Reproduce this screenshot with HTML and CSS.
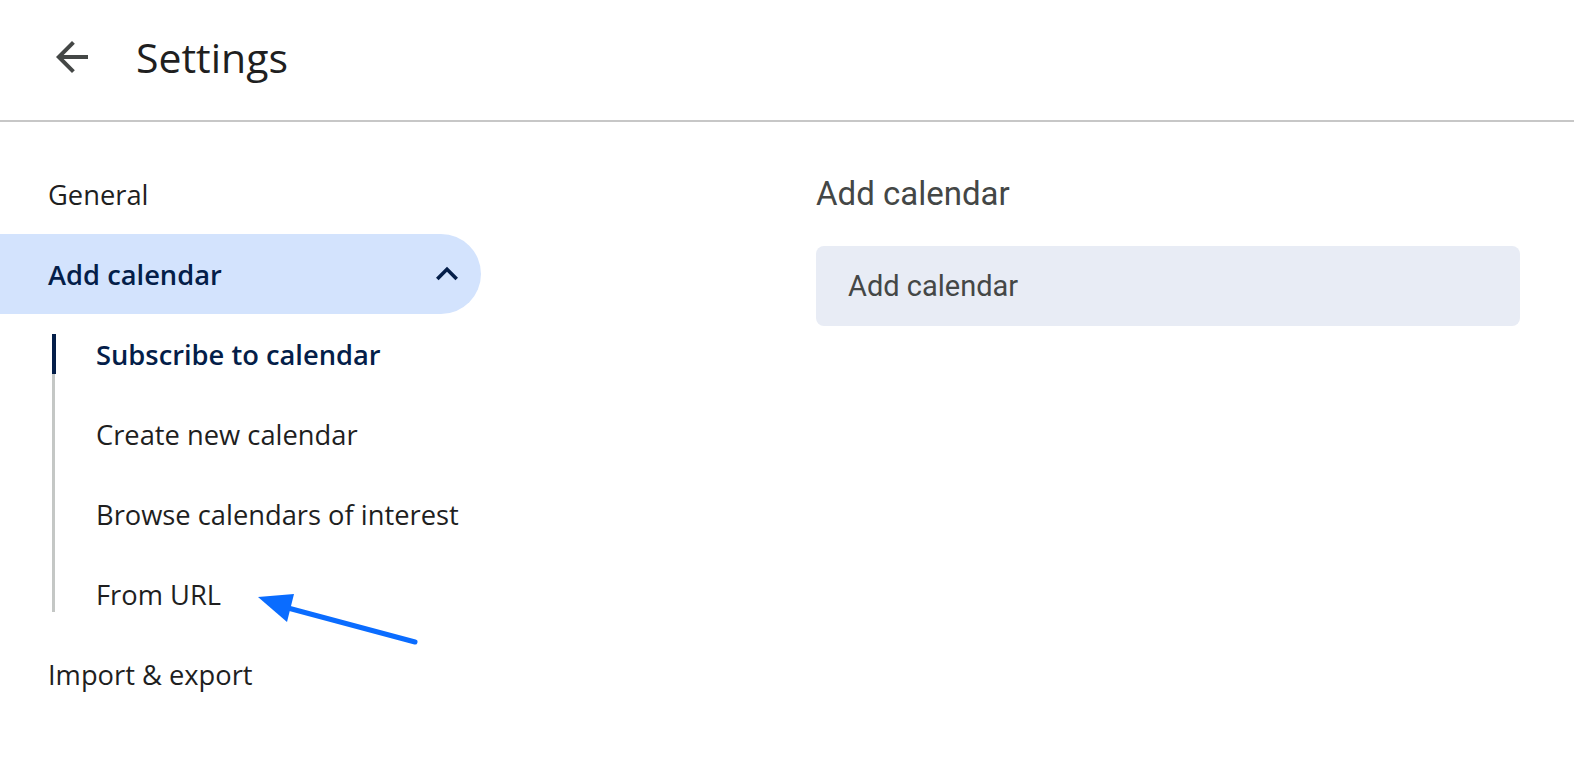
FILE: index.html
```html
<!DOCTYPE html>
<html>
<head>
<meta charset="utf-8">
<link rel="stylesheet" href="styles.css">
</head>
<body>
<header class="topbar">
  <button class="back" aria-label="Back">
    <svg viewBox="0 0 24 24" width="48" height="48"><path d="M20 11H7.83l5.59-5.59L12 4l-8 8 8 8 1.41-1.41L7.83 13H20v-2z" fill="#444746"/></svg>
  </button>
  <h1 class="title">Settings</h1>
</header>
<div class="main">
  <nav class="sidebar">
    <div class="item">General</div>
    <div class="item active">
      <span>Add calendar</span>
      <svg class="chev" viewBox="0 0 24 24" width="44" height="44"><path d="M7.41 15.41L12 10.83l4.59 4.58L18 14l-6-6-6 6z" fill="#041e49"/></svg>
    </div>
    <div class="sub">
      <div class="subitem current">Subscribe to calendar</div>
      <div class="subitem">Create new calendar</div>
      <div class="subitem">Browse calendars of interest</div>
      <div class="subitem">From URL</div>
    </div>
    <div class="item">Import &amp; export</div>
  </nav>
  <section class="content">
    <h2 class="heading">Add calendar</h2>
    <div class="box">Add calendar</div>
  </section>
</div>
<svg class="annot" width="200" height="80" viewBox="0 0 200 80">
  <line x1="157" y1="52" x2="30" y2="18" stroke="#0a6cff" stroke-width="5" stroke-linecap="round"/>
  <polygon points="0,7 36,4 29,32" fill="#0a6cff"/>
</svg>
</body>
</html>
```
FILE: styles.css
```css
html, body { margin: 0; padding: 0; background: #fff; }
body { font-family: "Open Sans", "Noto Sans", sans-serif; color: #1f1f1f; position: relative; }
.topbar {
  height: 114px;
  padding-bottom: 6px;
  border-bottom: 2px solid #c7c7c7;
  display: flex;
  align-items: center;
  padding-left: 48px;
}
.back { background: none; border: 0; padding: 0; width: 48px; height: 48px; display: flex; }
.title { margin: 0 0 0 40px; font-weight: 400; font-size: 41px; color: #1f1f1f; }
.main { display: flex; padding-top: 32px; }
.sidebar { width: 481px; flex: none; }
.item {
  height: 80px; display: flex; align-items: center; padding-left: 48px; font-size: 27.3px; color: #1f1f1f;
}
.item.active {
  background: #d3e3fd; color: #041e49; font-weight: 600; border-radius: 0 40px 40px 0;
  justify-content: space-between; padding-right: 12px;
}
.chev { display: block; }
.sub { position: relative; }
.sub::before {
  content: ""; position: absolute; left: 52px; top: 20px; bottom: 22px; width: 3px; background: #c4c7c5;
}
.subitem { height: 80px; display: flex; align-items: center; padding-left: 96px; font-size: 27.3px; color: #1f1f1f; position: relative; }
.subitem.current { color: #041e49; font-weight: 600; }
.subitem.current::before {
  content: ""; position: absolute; left: 52px; top: 20px; width: 4px; height: 40px; background: #041e49;
}
.content { margin-left: 335px; flex: 1; padding-right: 54px; }
.heading { margin: 20px 0 0 0; height: 40px; line-height: 40px; font-family: Roboto, sans-serif; font-weight: 400; font-size: 33px; color: #444746; }
.box {
  margin-top: 32px; height: 80px; background: #e8ecf5; border-radius: 8px; display: flex; align-items: center;
  padding-left: 32px; font-family: Roboto, sans-serif; font-size: 29px; color: #444746;
}
.annot { position: absolute; left: 258px; top: 590px; }
```
